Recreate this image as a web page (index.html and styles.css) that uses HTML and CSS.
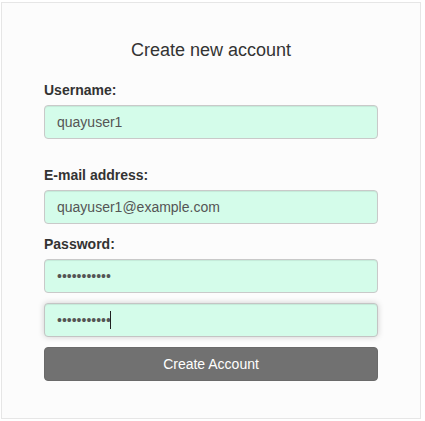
FILE: index.html
```html
<!DOCTYPE html>
<html>
<head>
<meta charset="utf-8">
<link rel="stylesheet" href="styles.css">
</head>
<body>
<div class="panel">
  <form class="signup">
    <h4 class="title">Create new account</h4>
    <div class="group group-first">
      <label class="label">Username:</label>
      <input class="field" type="text" value="quayuser1">
    </div>
    <div class="group group-email">
      <label class="label">E-mail address:</label>
      <input class="field" type="email" value="quayuser1@example.com">
    </div>
    <div class="group">
      <label class="label">Password:</label>
      <input class="field" type="password" value="passwordxyz">
    </div>
    <div class="group group-confirm">
      <div class="focus-wrap">
        <input class="field field-focus" type="password" value="passwordxyz">
        <span class="caret"></span>
      </div>
    </div>
    <button class="submit" type="button">Create Account</button>
  </form>
</div>
</body>
</html>
```
FILE: styles.css
```css
html, body {
  margin: 0;
  padding: 0;
  background: #ffffff;
}
body {
  padding: 2px 0 0 1px;
  font-family: "Liberation Sans", Arial, Helvetica, sans-serif;
  color: #333333;
}
.panel {
  box-sizing: border-box;
  width: 420px;
  height: 417px;
  border: 1px solid #e6e6e6;
  background: #fcfcfc;
}
.signup {
  padding: 37px 42px 0 42px;
  display: flex;
  flex-direction: column;
}
.title {
  margin: 0;
  font-size: 18px;
  line-height: 20px;
  font-weight: normal;
  text-align: center;
  color: #333333;
}
.group {
  display: flex;
  flex-direction: column;
}
.group-first {
  margin-top: 21px;
}
.group-email {
  margin-top: 27px;
}
.group + .group:not(.group-email) {
  margin-top: 11px;
}
.group-confirm {
  margin-top: 10px !important;
}
.label {
  font-size: 14px;
  line-height: 18px;
  font-weight: bold;
  color: #333333;
  margin-bottom: 6px;
}
.field {
  box-sizing: border-box;
  width: 334px;
  height: 34px;
  margin: 0;
  padding: 6px 12px;
  font-family: "Liberation Sans", Arial, Helvetica, sans-serif;
  font-size: 14px;
  line-height: 20px;
  color: #555555;
  background: #d4fcea;
  border: 1px solid #c9c9c9;
  border-radius: 4px;
  box-shadow: inset 0 1px 1px rgba(0,0,0,0.075);
  outline: none;
}
.focus-wrap {
  position: relative;
}
.field-focus {
  border-color: #c4c4c4;
  box-shadow: inset 0 1px 1px rgba(0,0,0,0.075), 0 0 6px rgba(0,0,0,0.18);
  caret-color: transparent;
}
.caret {
  position: absolute;
  left: 66px;
  top: 8px;
  width: 1px;
  height: 18px;
  background: #222222;
}
.submit {
  box-sizing: border-box;
  margin-top: 10px;
  width: 334px;
  height: 34px;
  padding: 6px 12px;
  font-family: "Liberation Sans", Arial, Helvetica, sans-serif;
  font-size: 14px;
  line-height: 20px;
  color: #ffffff;
  background: #717171;
  border: 1px solid #6a6a6a;
  border-radius: 4px;
}
```
